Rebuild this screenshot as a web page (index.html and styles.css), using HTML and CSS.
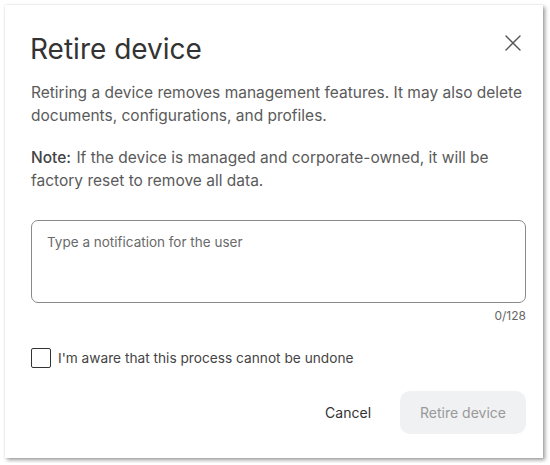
FILE: index.html
```html
<!DOCTYPE html>
<html lang="en">
<head>
<meta charset="utf-8">
<title>Retire device</title>
<link rel="stylesheet" href="styles.css">
</head>
<body>
  <div class="dialog" role="dialog" aria-labelledby="dlg-title">
    <div class="dialog-header">
      <h1 id="dlg-title" class="dialog-title">Retire device</h1>
      <button class="close-btn" aria-label="Close">
        <svg width="16" height="16" viewBox="0 0 16 16" aria-hidden="true">
          <path d="M1 1 L15 15 M15 1 L1 15" stroke="#555" stroke-width="1.4" fill="none" stroke-linecap="round"/>
        </svg>
      </button>
    </div>
    <p class="dialog-text">Retiring a device removes management features. It may also delete documents, configurations, and profiles.</p>
    <p class="dialog-text"><strong>Note:</strong> If the device is managed and corporate-owned, it will be factory reset to remove all data.</p>
    <div class="field">
      <textarea class="message" placeholder="Type a notification for the user" maxlength="128"></textarea>
      <div class="counter">0/128</div>
    </div>
    <label class="confirm">
      <span class="checkbox"></span>
      <span>I'm aware that this process cannot be undone</span>
    </label>
    <div class="actions">
      <button class="btn btn-text">Cancel</button>
      <button class="btn btn-primary" disabled>Retire device</button>
    </div>
  </div>
</body>
</html>
```

FILE: styles.css
```css
* { box-sizing: border-box; }

html, body {
  margin: 0;
  background: #ffffff;
}

body {
  padding: 5px;
  font-family: Inter, "Noto Sans", sans-serif;
  color: #555;
}

.dialog {
  width: 538px;
  height: 453px;
  background: #fff;
  padding: 28px 17px 24px 26px;
  box-shadow: 2px 2px 4px rgba(0, 0, 0, 0.4), 0 0 1px rgba(0, 0, 0, 0.15);
  display: flex;
  flex-direction: column;
}

.dialog-header {
  display: flex;
  justify-content: space-between;
  align-items: flex-start;
}

.dialog-title {
  margin: 0 0 0 -1px;
  font-size: 28px;
  line-height: 32px;
  font-weight: 400;
  color: #333;
}

.close-btn {
  border: 0;
  background: none;
  padding: 0;
  margin: 2px 5px 0 0;
  width: 16px;
  height: 16px;
  cursor: pointer;
}

.close-btn svg { display: block; }

.dialog-text {
  margin: 16px 0 0;
  font-size: 15.5px;
  line-height: 23px;
  color: #5a5a5a;
}

.dialog-text + .dialog-text { margin-top: 19px; }

.dialog-text strong {
  font-weight: 500;
  color: #444;
  margin-right: 1px;
}

.field {
  margin-top: 28px;
  display: flex;
  flex-direction: column;
}

.message {
  width: 495px;
  height: 83px;
  resize: none;
  border: 1px solid #8a8a8a;
  border-radius: 7px;
  padding: 12px 15px;
  font-family: inherit;
  font-size: 13.5px;
  line-height: 18px;
  color: #333;
}

.message::placeholder { color: #6a6a6a; }

.counter {
  width: 495px;
  text-align: right;
  font-size: 12px;
  line-height: 16px;
  margin-top: 5px;
  color: #666;
}

.confirm {
  margin-top: 24px;
  display: flex;
  align-items: center;
  gap: 7px;
  font-size: 13.7px;
  line-height: 20px;
  color: #444;
}

.checkbox {
  width: 20px;
  height: 20px;
  border: 1.5px solid #333;
  border-radius: 2px;
  flex: none;
}

.actions {
  margin-top: auto;
  display: flex;
  justify-content: flex-end;
  gap: 9px;
  width: 495px;
}

.btn {
  height: 43px;
  padding: 0 20px;
  border: 0;
  border-radius: 10px;
  font-family: inherit;
  font-size: 14px;
  background: none;
}

.btn-text { color: #333; }

.btn-primary {
  background: #f0f1f3;
  color: #999;
}
```
